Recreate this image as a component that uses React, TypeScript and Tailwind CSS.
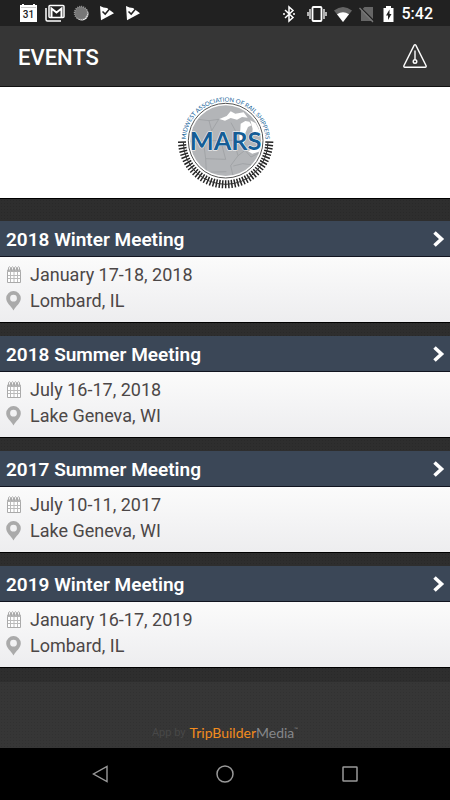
import React from 'react';

type EventItem = { title: string; date: string; place: string };

const events: EventItem[] = [
  { title: '2018 Winter Meeting', date: 'January 17-18, 2018', place: 'Lombard, IL' },
  { title: '2018 Summer Meeting', date: 'July 16-17, 2018', place: 'Lake Geneva, WI' },
  { title: '2017 Summer Meeting', date: 'July 10-11, 2017', place: 'Lake Geneva, WI' },
  { title: '2019 Winter Meeting', date: 'January 16-17, 2019', place: 'Lombard, IL' },
];

function PlayCheck() {
  return (
    <svg className="h-4 w-4" viewBox="0 0 16 16" aria-hidden="true">
      <path d="M1 1l3.500 1.600L8 3l7 5.200L2 15.200z" fill="#fff" />
      <path d="M3.500 6.500l2.700 2.600L10.500 4" fill="none" stroke="#222" strokeWidth="1.500" />
    </svg>
  );
}

function StatusBar() {
  return (
    <div className="flex h-[26px] items-center justify-between bg-[#212121] pr-[17px] pl-5">
      <div className="flex items-center gap-2">
        <svg className="h-[18px] w-[17px]" viewBox="0 0 17 18" aria-hidden="true">
          <path d="M0 1h2V0h2v1h9V0h2v1h2v17H0z" fill="#fff" />
          <path d="M1 3.500h15" stroke="#ccc" strokeWidth="1" />
          <text x="8.500" y="14" textAnchor="middle" fontSize="10" fontWeight="500" fontFamily="Roboto, sans-serif" fill="#222">31</text>
        </svg>
        <svg className="h-[18px] w-5" viewBox="0 0 20 18" aria-hidden="true">
          <path d="M1 4v11.500Q1 17 2.500 17H16" fill="none" stroke="#fff" strokeWidth="1.500" />
          <rect x="4" y="1.500" width="15" height="12" rx="1" fill="none" stroke="#fff" strokeWidth="1.500" />
          <path d="M6.500 13V4.500l5 4 5-4V13" fill="none" stroke="#fff" strokeWidth="2" />
        </svg>
        <svg className="h-[18px] w-4" viewBox="0 0 16 18" aria-hidden="true">
          <circle cx="9" cy="10" r="6.500" fill="#eee" />
          <circle cx="8" cy="9" r="6.500" fill="#777" stroke="#999" strokeWidth="1.500" strokeDasharray="1 1" />
        </svg>
        <div className="flex gap-[10px] pl-[2px]">
          <PlayCheck />
          <PlayCheck />
        </div>
      </div>
      <div className="flex items-center pt-[1px]">
        <svg className="h-[18px] w-3" viewBox="0 0 12 18" aria-hidden="true">
          <path d="M2 5l8 7.500L6 16V2l4 3.500L2 13" fill="none" stroke="#fff" strokeWidth="1.500" />
          <path d="M0 9h2M10 9h2" stroke="#fff" strokeWidth="1.500" />
        </svg>
        <svg className="ml-3 h-[18px] w-5" viewBox="0 0 20 18" aria-hidden="true">
          <rect x="5.500" y="2" width="9" height="14" rx="1" fill="none" stroke="#fff" strokeWidth="1.800" />
          <path d="M3 4v10M17 4v10M1 7v4M19 7v4" stroke="#fff" strokeWidth="1.300" />
        </svg>
        <svg className="ml-[6px] h-[18px] w-5" viewBox="0 0 20 18" aria-hidden="true">
          <path d="M1 5.500Q10-1.500 19 5.500L10 17z" fill="#666" />
          <path d="M4 9.300Q10 5 16 9.300L10 17z" fill="#fff" />
        </svg>
        <svg className="ml-[6px] h-[18px] w-[15px]" viewBox="0 0 15 18" aria-hidden="true">
          <path d="M5.500 2H14v14H2V5.500z" fill="#666" />
          <path d="M1 2l14 14" stroke="#212121" strokeWidth="1.300" />
          <path d="M.5 3l13.500 14" stroke="#777" strokeWidth="1.300" />
        </svg>
        <svg className="ml-[9px] h-[18px] w-[11px]" viewBox="0 0 11 18" aria-hidden="true">
          <path d="M.5 3H3V1h5v2h2.500v14H.5z" fill="#fff" />
          <path d="M6.500 4.500L3 10.500h2v4.500l3.500-6h-2z" fill="#222" />
        </svg>
        <span className="ml-2 text-[16px] leading-5 font-medium text-white">5:42</span>
      </div>
    </div>
  );
}

function MarsLogo() {
  const ties = Array.from({ length: 45 }, (_, i) => {
    const a = ((2 + i * 4) * Math.PI) / 180;
    const c = Math.cos(a);
    const s = Math.sin(a);
    return `M${167 + 119 * c} ${158 + 119 * s}L${167 + 143 * c} ${158 + 143 * s}`;
  }).join('');
  return (
    <svg className="h-[110px] w-[110px]" viewBox="0 0 330 330" role="img" aria-label="MARS, Midwest Association of Rail Shippers">
      <defs>
        <path id="ring-text" d="M47 161A120 120 0 0 1 287 161" />
        <clipPath id="globe"><circle cx="167" cy="158" r="106" /></clipPath>
      </defs>
      <circle cx="167" cy="158" r="112" fill="#fff" stroke="#555" strokeWidth="3" />
      <g clipPath="url(#globe)">
        <rect x="55" y="45" width="225" height="225" fill="#b3b5b8" />
        <path d="M148 93l22-9 12-14 14 7 25-4 12 16-17-2-15 8-19-5-17 8z" fill="#fff" />
        <path d="M212 107l14-8 12 2 7 11-11 5-8 18-5 36-11-3-2-24 3-19z" fill="#fff" />
        <path d="M241 97l16 9 15 29-11 8-9-8-7 13 3-25z" fill="#fff" />
        <path d="M234 190l20-10 25-7-5 16-27 8z" fill="#fff" />
        <path d="M85 94l32 4 8 30-3 30-60 2M117 98l29-4M122 158l70-1M146 94l-21 34M183 104l13 24-5 30 13 45-22 30 8 34M100 160l7 52 60 2M107 212l2 41 60-2M167 214l-15-57M204 203l21-16v-20M225 187l18 20 24-12M190 234l28-7 25 3" fill="none" stroke="#999c9f" strokeWidth="2" />
      </g>
      <path d={ties} stroke="#252525" strokeWidth="4.500" fill="none" />
      <path d="M40 162A127 127 0 0 0 294 162" fill="none" stroke="#333" strokeWidth="3" />
      <text fontFamily="Lato, sans-serif" fontSize="18" fill="#17649a">
        <textPath href="#ring-text" startOffset="50%" textAnchor="middle">MIDWEST ASSOCIATION OF RAIL SHIPPERS</textPath>
      </text>
      <text x="167" y="186" textAnchor="middle" fontFamily="Lato, sans-serif" fontWeight="700" fontSize="76" fill="#145d96" stroke="#fff" strokeWidth="3" paintOrder="stroke">MARS</text>
    </svg>
  );
}

function CalendarIcon() {
  return (
    <svg className="h-[18px] w-4" viewBox="0 0 16 18" aria-hidden="true">
      <path d="M1.500 4v12.500h13V4z" fill="#fff" stroke="#aaa" strokeWidth="1" />
      <path d="M1 5h14" stroke="#b5b5b5" strokeWidth="2" />
      <path d="M2 9.500h12M2 12.500h12M4.500 6v10M8 6v10M11.500 6v10" stroke="#bbb" strokeWidth="1" />
      <path d="M2.500 5V1.500q1-1.500 2 0V4M5.500 5V1.500q1-1.500 2 0V4M8.500 5V1.500q1-1.500 2 0V4M11.500 5V1.500q1-1.500 2 0V4" stroke="#aaa" strokeWidth="1" fill="none" />
    </svg>
  );
}

function PinIcon() {
  return (
    <svg className="h-5 w-4" viewBox="0 0 16 20" aria-hidden="true">
      <path fillRule="evenodd" d="M7.500 0A7.300 7.300 0 0 0 .2 7.300C.2 12 5 15 7.500 19.500 10 15 14.800 12 14.800 7.300A7.300 7.300 0 0 0 7.500 0zm0 3.800a3.400 3.400 0 1 1 0 6.800 3.400 3.400 0 0 1 0-6.800z" fill="#aaa" />
    </svg>
  );
}

function EventCard({ title, date, place }: EventItem) {
  return (
    <article>
      <h2>
        <button type="button" className="flex h-9 w-full items-center justify-between border-b border-[#111420] bg-[#3b4757] pr-[5px] pl-[6px] pt-[2px] text-left text-[19px] leading-6 font-semibold text-white">
          {title}
          <svg className="h-[18px] w-[13px]" viewBox="0 0 13 18" aria-hidden="true">
            <path d="M2.500 1.500L9.500 8l-7 6.500" fill="none" stroke="#fff" strokeWidth="3.600" />
          </svg>
        </button>
      </h2>
      <div className="h-[66px] border-b border-black bg-linear-to-b from-[#fbfbfb] to-[#ededef] px-[6px] pt-[5px] text-[18px] leading-[26px] text-[#4c4747]">
        <p className="flex items-center gap-2"><CalendarIcon />{date}</p>
        <p className="flex items-center gap-2"><PinIcon />{place}</p>
      </div>
    </article>
  );
}

export default function App() {
  return (
    <div className="flex min-h-screen flex-col bg-[#2e2e2e] font-[Roboto,sans-serif]">
      <StatusBar />
      <header className="flex h-[61px] items-center justify-between border-b border-[#111] bg-[#363636] pr-[22px] pl-[18px]">
        <h1 className="pt-1 text-[22px] leading-7 font-medium text-white">EVENTS</h1>
        <button type="button" aria-label="Alerts">
          <svg className="h-[26px] w-[26px]" viewBox="0 0 26 26" fill="none" stroke="#fff" strokeWidth="1.400" aria-hidden="true">
            <path d="M12.200 2.200q.8-1.200 1.600 0l10.300 20.500q.4 1.500-1 1.500H2.900q-1.400 0-1-1.500z" />
            <path d="M13 7.500v9" />
            <circle cx="13" cy="18.500" r="1.800" />
          </svg>
        </button>
      </header>
      <div className="flex h-28 items-end justify-center border-b border-black bg-white">
        <MarsLogo />
      </div>
      <main className="flex flex-col gap-[13px] bg-[#2e2e2e] bg-[radial-gradient(#292929_1px,transparent_1px)] bg-size-[3px_3px] pt-[22px] pb-[14px]">
        {events.map((event) => <EventCard key={event.title} {...event} />)}
      </main>
      <footer className="flex flex-1 items-end justify-center bg-[#363636] bg-[radial-gradient(#313131_1px,transparent_1px)] bg-size-[3px_3px] pb-[5px] text-[11px] leading-5 text-[#484848]">
        <p className="flex items-center gap-1">
          App by
          <span className="flex font-[Lato,sans-serif] text-[14px] text-[#f28c1e]">
            TripBuilder<span className="text-[#85878a]">Media</span>
            <span className="text-[5px] leading-3 text-[#85878a]">™</span>
          </span>
        </p>
      </footer>
      <nav className="grid h-[52px] grid-cols-[1fr_24px_1fr] items-center bg-black px-[88px]" aria-label="System navigation">
        <button type="button" aria-label="Back" className="justify-self-start">
          <svg className="h-6 w-6" viewBox="0 0 24 24" fill="none" stroke="#999" strokeWidth="1.400" aria-hidden="true">
            <path d="M19 4.500v15L5.500 12z" />
          </svg>
        </button>
        <button type="button" aria-label="Home">
          <svg className="h-6 w-6" viewBox="0 0 24 24" fill="none" stroke="#999" strokeWidth="1.500" aria-hidden="true">
            <circle cx="12" cy="12" r="8" />
          </svg>
        </button>
        <button type="button" aria-label="Recent apps" className="justify-self-end">
          <svg className="h-6 w-6" viewBox="0 0 24 24" fill="none" stroke="#999" strokeWidth="1.500" aria-hidden="true">
            <rect x="5" y="5" width="14" height="14" rx=".5" />
          </svg>
        </button>
      </nav>
    </div>
  );
}
